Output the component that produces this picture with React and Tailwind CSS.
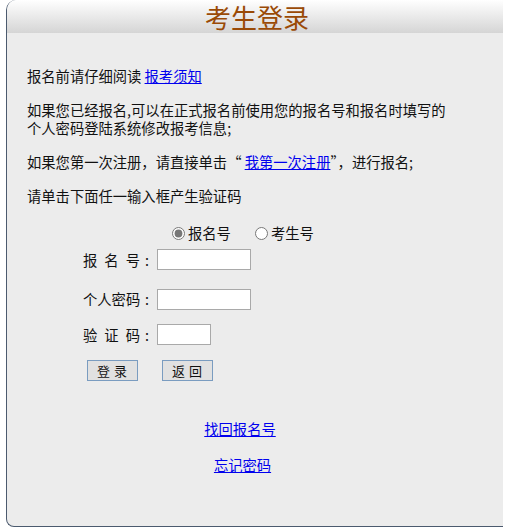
import React, { useState } from 'react';

function Field({ label, spread, children, className }) {
  return (
    <div className={`flex items-center ${className}`}>
      <span className={`flex w-[57px] ${spread ? 'justify-between' : ''}`}>
        {label.split('').map((c, i) => (
          <span key={i}>{c}</span>
        ))}
      </span>
      <span className="w-[14px] text-center">:</span>
      <span className="ml-[3px] flex">{children}</span>
    </div>
  );
}

export default function App() {
  const [mode, setMode] = useState('bmh');
  const font = { fontFamily: '"Noto Sans CJK SC", "Noto Sans", sans-serif' };

  return (
    <div className="h-[530px] w-[509px] bg-white pl-[6px]" style={font} lang="zh-CN">
      <div className="h-[527px] w-[497px] overflow-hidden rounded-tl-[10px] rounded-bl-[8px] border-b border-l border-[#4b5a6e] bg-[#ececec] text-[14.3px] text-[#111]">
        {/* Header */}
        <div className="flex h-[33px] items-center justify-center bg-gradient-to-b from-white to-[#d5d5d5] pl-[4px]">
          <h1 className="text-[26px] leading-[30px] text-[#9a4a06]">考生登录</h1>
        </div>

        {/* Notes */}
        <div className="pl-[20px] pt-[34px] leading-[18px]">
          <p>
            报名前请仔细阅读 <a href="#" className="text-[#0000ee] underline">报考须知</a>
          </p>
          <p className="mt-4">
            如果您已经报名,可以在正式报名前使用您的报名号和报名时填写的
            <br />
            个人密码登陆系统修改报考信息;
          </p>
          <p className="mt-4">
            如果您第一次注册，请直接单击“ <a href="#" className="text-[#0000ee] underline">我第一次注册</a>”，进行报名;
          </p>
          <p className="mt-4">请单击下面任一输入框产生验证码</p>
        </div>

        {/* Form */}
        <div className="mt-[19px] pl-[76px]">
          <div className="flex h-[18px] items-center pl-[89px]">
            <label className="flex items-center gap-[3px]">
              <input
                type="radio"
                name="kind"
                checked={mode === 'bmh'}
                onChange={() => setMode('bmh')}
                className="m-0 h-[13px] w-[13px] accent-[#777]"
              />
              <span>报名号</span>
            </label>
            <label className="ml-[24px] flex items-center gap-[3px]">
              <input
                type="radio"
                name="kind"
                checked={mode === 'ksh'}
                onChange={() => setMode('ksh')}
                className="m-0 h-[13px] w-[13px] accent-[#777]"
              />
              <span>考生号</span>
            </label>
          </div>

          <Field label="报名号" spread className="mt-[7px]">
            <input className="h-[21px] w-[94px] border border-[#a9a9a9] bg-white" />
          </Field>
          <Field label="个人密码" className="mt-[18px]">
            <input type="password" className="h-[21px] w-[94px] border border-[#a9a9a9] bg-white" />
          </Field>
          <Field label="验证码" spread className="mt-[14px]">
            <input className="h-[21px] w-[54px] border border-[#a9a9a9] bg-white" />
          </Field>

          <div className="mt-[15px] flex gap-[24px] pl-[4px]">
            <button className="h-[21px] w-[51px] border border-[#7a9cc0] bg-[#e1e1e1] pl-[3px] text-[13px] leading-none tracking-[4px]">
              登录
            </button>
            <button className="h-[21px] w-[51px] border border-[#7a9cc0] bg-[#e1e1e1] pl-[3px] text-[13px] leading-none tracking-[4px]">
              返回
            </button>
          </div>
        </div>

        {/* Links */}
        <div className="mt-[39px] w-[466px] text-center leading-[18px]">
          <a href="#" className="text-[#0000ee] underline">找回报名号</a>
          <div className="mt-[18px] pl-[5px]">
            <a href="#" className="text-[#0000ee] underline">忘记密码</a>
          </div>
        </div>
      </div>
    </div>
  );
}
